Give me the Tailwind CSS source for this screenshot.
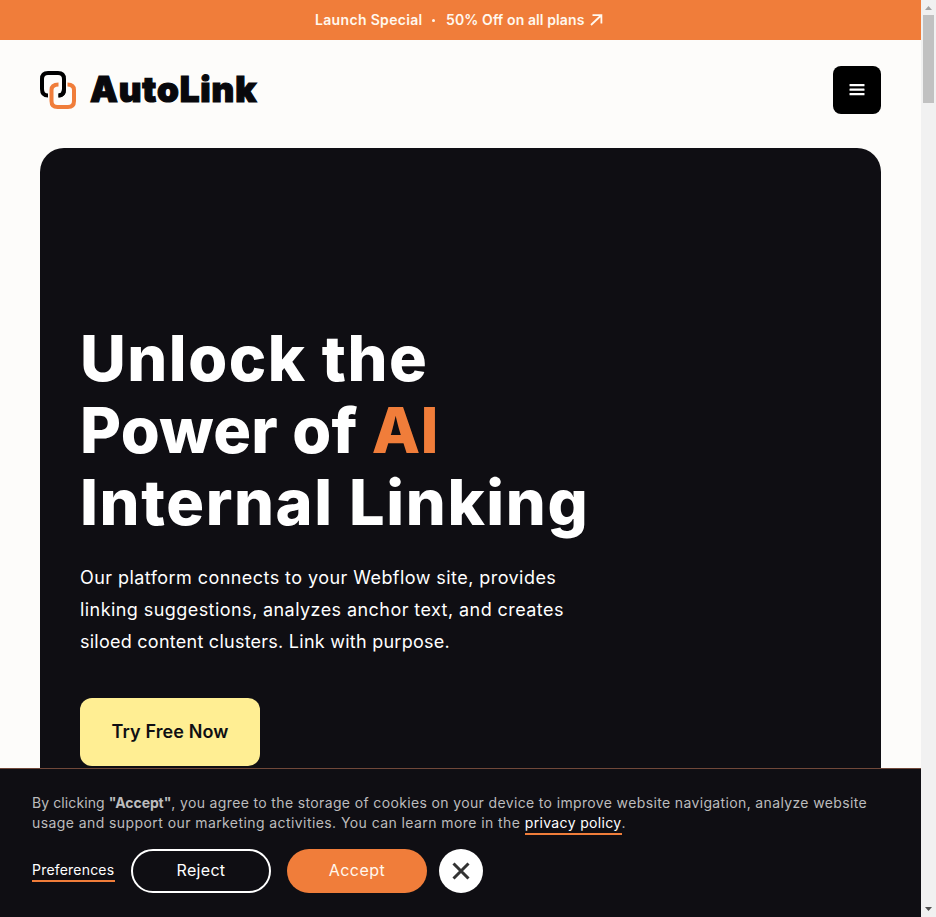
<!DOCTYPE html>
<html lang="en">
<head>
<meta charset="utf-8">
<title>AutoLink</title>
<script src="https://cdn.jsdelivr.net/npm/@tailwindcss/browser@4"></script>
</head>
<body class="h-[917px] overflow-hidden bg-[#fdfcfa] font-[Inter,sans-serif]">
<div class="relative flex h-[917px] w-[936px]">
  <div class="flex w-[921px] flex-col">
    <a class="flex h-10 shrink-0 items-center pl-[315px] text-sm font-semibold whitespace-pre text-[#fff8ee] bg-[#f07d3a]">
      <span class="w-[108px] tracking-[0.33px]">Launch Special</span>
      <span class="ml-[9px] size-[3px] rounded-full bg-[#fff8ee]"></span>
      <span class="ml-[11px] w-[139px] tracking-[0.1px]">50% Off on all plans</span>
      <svg class="ml-[5px]" width="13" height="12" viewBox="0 0 13 12" fill="none" stroke="#fff8ee" stroke-width="1.8"><path d="M1 11 11 1.5M2.5 1.2H11.4V9.5"/></svg>
    </a>
    <header class="flex h-[100px] shrink-0 items-center justify-between px-10">
      <div class="flex items-center">
        <svg width="36" height="38" viewBox="0 0 36 38" fill="none" stroke-width="4">
          <path stroke="#000" d="M8 24.5Q2 24.5 2 18V8Q2 2 8 2H18Q24 2 24 8V18Q24 24.5 18.5 24.5"/>
          <path stroke="#f07d3a" d="M18.5 13.5Q11.500 13.500 11.500 19V30Q11.500 36 17.500 36H28Q34 36 34 30V19Q34 13.500 27.500 13.500"/>
          <path stroke="#000" d="M24 12V18Q24 24.500 18.500 24.500"/>
        </svg>
        <span class="ml-[14px] pb-0.5 text-[35px] leading-10 font-black tracking-[0.9px] [-webkit-text-stroke:1.2px_#08080c] text-[#08080c]">AutoLink</span>
      </div>
      <button class="flex size-12 items-center justify-center rounded-lg bg-black" aria-label="Menu">
        <svg width="16" height="12" viewBox="0 0 16 12" fill="#fff"><rect x=".5" width="15" height="2.300" rx=".5"/><rect x=".5" y="4.500" width="15" height="2.300" rx=".5"/><rect x=".5" y="9" width="15" height="2.300" rx=".5"/></svg>
      </button>
    </header>
    <main class="mx-10 mt-2 h-[769px] shrink-0 rounded-t-[24px] bg-[#0f0e13] px-10 pt-[174px] text-white">
      <h1 class="text-[63px] leading-[72px] font-extrabold whitespace-nowrap">
        <span class="block tracking-[1.5px]">Unlock the</span>
        <span class="block tracking-[0.3px]">Power of <span class="text-[#f07d3a]">AI</span></span>
        <span class="block tracking-[1.6px]">Internal Linking</span>
      </h1>
      <p class="mt-6 text-[18px] leading-8 whitespace-nowrap">
        <span class="block tracking-[0.44px]">Our platform connects to your Webflow site, provides</span>
        <span class="block tracking-[0.43px]">linking suggestions, analyzes anchor text, and creates</span>
        <span class="block tracking-[0.25px]">siloed content clusters. Link with purpose.</span>
      </p>
      <a class="mt-10 flex h-[68px] w-[180px] items-center justify-center rounded-xl bg-[#ffee93] pb-px text-[18px] font-semibold tracking-[0.1px] whitespace-nowrap text-[#0f0e13]">Try Free Now</a>
    </main>
  </div>
  <aside class="flex w-[15px] flex-col items-center justify-between bg-[#f1f1f1]">
    <div class="flex flex-col items-center">
      <svg width="15" height="15" viewBox="0 0 15 15"><path fill="#a3a3a3" d="M4 10 7.500 6 11 10Z"/></svg>
      <div class="h-[88px] w-[11px] bg-[#c1c1c1]"></div>
    </div>
    <svg width="15" height="15" viewBox="0 0 15 15"><path fill="#505050" d="M4 5H11L7.500 9Z"/></svg>
  </aside>
  <section class="absolute bottom-0 left-0 h-[149px] w-[921px] border-t border-[#70483a] bg-[#0f0e13] px-8 pt-6">
    <p class="text-sm leading-5 whitespace-nowrap text-[#bcbcbd]">
      <span class="block tracking-[0.36px]"><span class="tracking-[0.1px]">By clicking <b class="tracking-[-0.1px]">"Accept"</b></span>, you agree to the storage of cookies on your device to improve website navigation, analyze website</span>
      <span class="block h-5 tracking-[0.42px]">usage and support our marketing activities. You can learn more in the <a class="inline-block h-[22px] border-b-2 border-[#f07d3a] align-top tracking-[0.35px] text-white">privacy policy</a>.</span>
    </p>
    <div class="mt-4 flex items-center">
      <a class="h-[22px] w-[83px] border-b-2 border-[#f07d3a] text-sm leading-5 tracking-[0.2px] text-white">Preferences</a>
      <button class="ml-4 h-11 w-[140px] rounded-full border-2 border-white pb-0.5 text-base tracking-[0.3px] text-white">Reject</button>
      <button class="ml-4 h-11 w-[140px] rounded-full bg-[#f07d3a] pb-0.5 text-base tracking-[0.5px] text-[#fff8ee]">Accept</button>
      <button class="ml-3 flex size-11 items-center justify-center rounded-full bg-white" aria-label="Close">
        <svg width="18" height="18" viewBox="0 0 18 18" fill="none" stroke="#333" stroke-width="3"><path d="M1.500 1.500 16.500 16.500M16.500 1.500 1.500 16.500"/></svg>
      </button>
    </div>
  </section>
</div>
</body>
</html>
